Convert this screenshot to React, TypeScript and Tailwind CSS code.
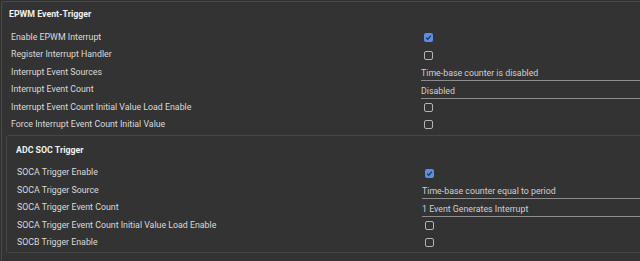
import React from "react";

type Row =
  | { label: string; kind: "check"; checked: boolean }
  | { label: string; kind: "text"; value: string };

const outerRows: Row[] = [
  { label: "Enable EPWM Interrupt", kind: "check", checked: true },
  { label: "Register Interrupt Handler", kind: "check", checked: false },
  { label: "Interrupt Event Sources", kind: "text", value: "Time-base counter is disabled" },
  { label: "Interrupt Event Count", kind: "text", value: "Disabled" },
  { label: "Interrupt Event Count Initial Value Load Enable", kind: "check", checked: false },
  { label: "Force Interrupt Event Count Initial Value", kind: "check", checked: false },
];

const innerRows: Row[] = [
  { label: "SOCA Trigger Enable", kind: "check", checked: true },
  { label: "SOCA Trigger Source", kind: "text", value: "Time-base counter equal to period" },
  { label: "SOCA Trigger Event Count", kind: "text", value: "1 Event Generates Interrupt" },
  { label: "SOCA Trigger Event Count Initial Value Load Enable", kind: "check", checked: false },
  { label: "SOCB Trigger Enable", kind: "check", checked: false },
];

function Check({ checked }: { checked: boolean }) {
  if (checked) {
    return (
      <div className="w-[9px] h-[9px] rounded-[2px] bg-[#5b8fe6] flex items-center justify-center">
        <svg width="7" height="7" viewBox="0 0 8 8">
          <path d="M1.2 4.2 L3.1 6 L6.8 1.9" fill="none" stroke="#213457" strokeWidth="1.4" />
        </svg>
      </div>
    );
  }
  return <div className="w-[9px] h-[9px] rounded-[2px] border-[1.5px] border-[#b4b4b4]" />;
}

function Rows({ rows, labelW }: { rows: Row[]; labelW: string }) {
  return (
    <div className="flex flex-col">
      {rows.map((r) => (
        <div key={r.label} className="flex h-[17.4px] items-center">
          <div className={`${labelW} shrink-0 text-[#dadada]`}>{r.label}</div>
          <div className="flex-1 h-full flex items-center">
            {r.kind === "check" ? (
              <div className="pl-[3px]">
                <Check checked={r.checked} />
              </div>
            ) : (
              <div className="w-full h-full flex items-end">
                <div className="w-full border-b-[1.5px] border-[#8c8c8c] text-[#d0d0d0] leading-[12px] pb-[1px]">
                  {r.value}
                </div>
              </div>
            )}
          </div>
        </div>
      ))}
    </div>
  );
}

export default function App() {
  return (
    <div
      className="w-[640px] h-[261px] overflow-hidden bg-[#303030] text-[8.8px]"
      style={{ fontFamily: "Roboto, 'Liberation Sans', sans-serif" }}
    >
      <div className="w-[700px] h-[270px] mt-[1px] ml-[1px] border-t border-l border-[#4a4a4a] rounded-tl-[3px] bg-[#333333]">
        <div className="h-[25px] flex items-center pl-[7px] font-bold text-[#f0f0f0]">
          EPWM Event-Trigger
        </div>
        <div className="pl-[9px] pt-[2px]">
          <Rows rows={outerRows} labelW="w-[410px]" />
        </div>
        <div className="mt-[2px] ml-[4px] w-[690px] h-[118px] border border-[#474747] rounded-[3px]">
          <div className="h-[28px] flex items-center pl-[9px] pt-[1px] font-bold text-[#f0f0f0]">
            ADC SOC Trigger
          </div>
          <div className="pl-[10px]">
            <Rows rows={innerRows} labelW="w-[405px]" />
          </div>
        </div>
      </div>
    </div>
  );
}
